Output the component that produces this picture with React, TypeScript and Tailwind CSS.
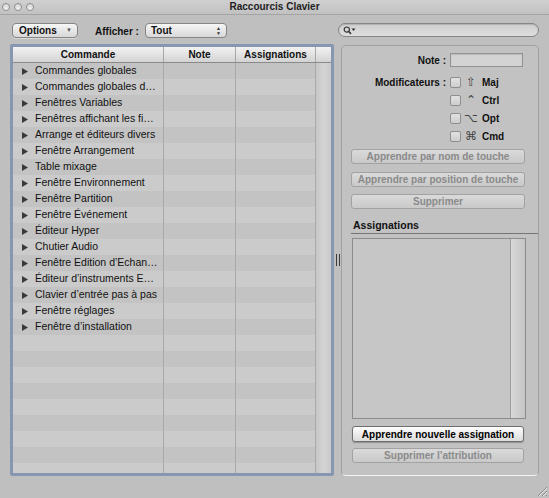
import React from 'react';

const rows = [
  'Commandes globales',
  'Commandes globales d…',
  'Fenêtres Variables',
  'Fenêtres affichant les fi…',
  'Arrange et éditeurs divers',
  'Fenêtre Arrangement',
  'Table mixage',
  'Fenêtre Environnement',
  'Fenêtre Partition',
  'Fenêtre Événement',
  'Éditeur Hyper',
  'Chutier Audio',
  'Fenêtre Edition d’Echan…',
  'Éditeur d’instruments E…',
  'Clavier d’entrée pas à pas',
  'Fenêtre réglages',
  'Fenêtre d’installation',
];

const allRows = [...rows, ...Array(9).fill('')];

const mods = [
  { sym: '⇧', label: 'Maj' },
  { sym: '⌃', label: 'Ctrl' },
  { sym: '⌥', label: 'Opt' },
  { sym: '⌘', label: 'Cmd' },
];

function Light() {
  return <div className="w-[8px] h-[8px] rounded-full border border-[#8d8d8d] bg-gradient-to-b from-[#d6d6d6] to-[#f2f2f2]" />;
}

function Disabled({ label, className = '' }: { label: string; className?: string }) {
  return (
    <div className={`ml-[9px] w-[174px] h-[15px] rounded-[3px] border border-[#a2a2a2] bg-gradient-to-b from-[#dadada] to-[#c9c9c9] flex items-center justify-center text-[10px] font-bold text-[#8a8a8a] ${className}`}>
      {label}
    </div>
  );
}

export default function App() {
  return (
    <div className="w-[549px] h-[498px] bg-[#bfbfbf] flex flex-col overflow-hidden font-['Liberation_Sans',Arial,sans-serif] text-[#111]">
      {/* title bar */}
      <div className="h-[15px] grid grid-cols-[1fr_auto_1fr] items-center border-b border-[#a4a4a4] bg-gradient-to-b from-[#d0d0d0] to-[#c1c1c1]">
        <div className="flex items-center gap-[4px] pl-[2px]">
          <Light />
          <Light />
          <Light />
        </div>
        <div className="text-[10px] font-bold text-[#222] leading-none">Raccourcis Clavier</div>
        <div />
      </div>

      {/* toolbar */}
      <div className="h-[29px] flex items-start pt-[8px] pl-[12px]">
        <div className="w-[66px] h-[15px] rounded-[4px] border border-[#858585] bg-gradient-to-b from-[#f6f6f6] to-[#d8d8d8] flex items-center pl-[6px] pr-[5px] shadow-[0_1px_0_rgba(255,255,255,0.4)]">
          <span className="text-[10px] font-bold flex-1">Options</span>
          <span className="text-[6px] text-[#555]">▼</span>
        </div>
        <span className="ml-[17px] mt-[1px] text-[10px] font-bold">Afficher :</span>
        <div className="ml-[6px] w-[82px] h-[15px] rounded-[4px] border border-[#858585] bg-gradient-to-b from-[#f6f6f6] to-[#d8d8d8] flex items-center pl-[5px] pr-[5px]">
          <span className="text-[10px] font-bold flex-1">Tout</span>
          <span className="flex flex-col text-[5px] leading-[5px] text-[#333]">
            <span>▲</span>
            <span>▼</span>
          </span>
        </div>
        <div className="ml-auto mr-[10px] w-[201px] h-[14px] rounded-full border border-[#858585] bg-gradient-to-b from-[#cfcfcf] to-[#dedede] flex items-center pl-[4px] shadow-[inset_0_1px_1px_rgba(0,0,0,0.15)]">
          <svg width="13" height="9" viewBox="0 0 13 9">
            <circle cx="3.8" cy="3.6" r="2.6" fill="none" stroke="#333" strokeWidth="1.2" />
            <line x1="5.7" y1="5.5" x2="8" y2="7.9" stroke="#333" strokeWidth="1.6" />
            <path d="M8.5 2.5 L12.5 2.5 L10.5 5 Z" fill="#333" />
          </svg>
        </div>
      </div>

      {/* main */}
      <div className="flex pl-[10px] h-[432px]">
        {/* table */}
        <div className="w-[324px] h-[432px] border-[3px] border-[#8797b1] rounded-[2px] flex flex-col overflow-hidden shadow-[inset_0_0_0_1px_#70809a]">
          <div className="h-[16px] shrink-0 grid grid-cols-[151px_72px_80px_1fr] border-b border-[#8a8a8a] bg-gradient-to-b from-[#f2f2f2] to-[#d3d3d3] text-[10px] font-bold">
            <div className="flex items-center justify-center border-r border-[#a8a8a8]">Commande</div>
            <div className="flex items-center justify-center border-r border-[#a8a8a8]">Note</div>
            <div className="flex items-center justify-center border-r border-[#a8a8a8]">Assignations</div>
            <div />
          </div>
          <div className="flex flex-1 overflow-hidden">
            <div className="w-[303px] flex flex-col">
              {allRows.map((r, i) => (
                <div
                  key={i}
                  className={`h-[16px] shrink-0 grid grid-cols-[151px_72px_80px] text-[10.5px] ${i % 2 === 0 ? 'bg-[#c3c3c3]' : 'bg-[#cbcbcb]'}`}
                >
                  <div className="flex items-center border-r border-[#a9a9a9] pl-[9px] overflow-hidden whitespace-nowrap">
                    {r && (
                      <>
                        <svg width="6" height="7" viewBox="0 0 6 7" className="shrink-0">
                          <path d="M0 0 L6 3.5 L0 7 Z" fill="#3a3a3a" />
                        </svg>
                        <span className="ml-[7px]">{r}</span>
                      </>
                    )}
                  </div>
                  <div className="border-r border-[#a9a9a9]" />
                  <div className="border-r border-[#a9a9a9]" />
                </div>
              ))}
            </div>
            <div className="flex-1 bg-gradient-to-r from-[#c6c6c6] via-[#d4d4d4] to-[#cacaca]" />
          </div>
        </div>

        {/* splitter */}
        <div className="w-[7px] flex items-center justify-center">
          <div className="w-[4px] h-[12px] border-x border-[#3c3c3c]" />
        </div>

        {/* right panel */}
        <div className="mt-[1px] w-[198px] h-[431px] rounded-[5px] border border-[#a0a0a0] border-b-[#f4f4f4] bg-[#c2c2c2] flex flex-col">
          <div className="mt-[7px] h-[14px] flex items-center">
            <span className="w-[104px] text-right text-[10px] font-bold">Note :</span>
            <div className="ml-[4px] w-[73px] h-[14px] border border-[#929292] bg-[#d3d3d3] shadow-[inset_0_1px_1px_rgba(0,0,0,0.12)]" />
          </div>
          <div className="mt-[6px] flex flex-col">
            {mods.map((m, i) => (
              <div key={m.label} className="h-[18px] flex items-center">
                <span className="w-[104px] text-right text-[10px] font-bold">{i === 0 ? 'Modificateurs :' : ''}</span>
                <div className="ml-[4px] w-[11px] h-[11px] rounded-[2px] border border-[#8e8e8e] bg-gradient-to-b from-[#e2e2e2] to-[#cdcdcd]" />
                <span className="ml-[3px] w-[14px] text-center text-[12px] leading-none text-[#444] font-['DejaVu_Sans',sans-serif]">{m.sym}</span>
                <span className="ml-[4px] text-[10px] font-bold">{m.label}</span>
              </div>
            ))}
          </div>
          <Disabled label="Apprendre par nom de touche" className="mt-[4px]" />
          <Disabled label="Apprendre par position de touche" className="mt-[8px]" />
          <Disabled label="Supprimer" className="mt-[7px]" />

          <div className="mt-[10px] ml-[9px] pl-[2px] pb-[1px] border-b border-[#757575] text-[10.5px] font-bold leading-[13px]">
            Assignations
          </div>
          <div className="mt-[4px] ml-[10px] w-[174px] h-[181px] border border-[#8c8c8c] bg-[#c6c6c6] flex justify-end">
            <div className="w-[15px] border-l border-[#9e9e9e] bg-gradient-to-r from-[#d9d9d9] to-[#c4c4c4]" />
          </div>
          <div className="mt-[7px] ml-[10px] w-[172px] h-[16px] rounded-[3px] border border-[#6f6f6f] bg-gradient-to-b from-[#fdfdfd] to-[#dcdcdc] flex items-center justify-center text-[10px] font-bold text-black shadow-[0_1px_1px_rgba(0,0,0,0.25)]">
            Apprendre nouvelle assignation
          </div>
          <div className="mt-[6px] ml-[10px] w-[172px] h-[15px] rounded-[3px] border border-[#a2a2a2] bg-gradient-to-b from-[#dadada] to-[#c9c9c9] flex items-center justify-center text-[10px] font-bold text-[#8a8a8a]">
            Supprimer l’attribution
          </div>
        </div>
      </div>

      {/* bottom strip with resize grip */}
      <div className="flex-1 flex justify-end items-end">
        <svg width="12" height="12" viewBox="0 0 12 12" className="mb-[1px] mr-[1px]">
          <line x1="11" y1="2" x2="2" y2="11" stroke="#8a8a8a" strokeWidth="1" />
          <line x1="11" y1="6" x2="6" y2="11" stroke="#8a8a8a" strokeWidth="1" />
          <line x1="11" y1="10" x2="10" y2="11" stroke="#8a8a8a" strokeWidth="1" />
          <line x1="11" y1="3" x2="3" y2="11" stroke="#e6e6e6" strokeWidth="1" />
          <line x1="11" y1="7" x2="7" y2="11" stroke="#e6e6e6" strokeWidth="1" />
        </svg>
      </div>
    </div>
  );
}
